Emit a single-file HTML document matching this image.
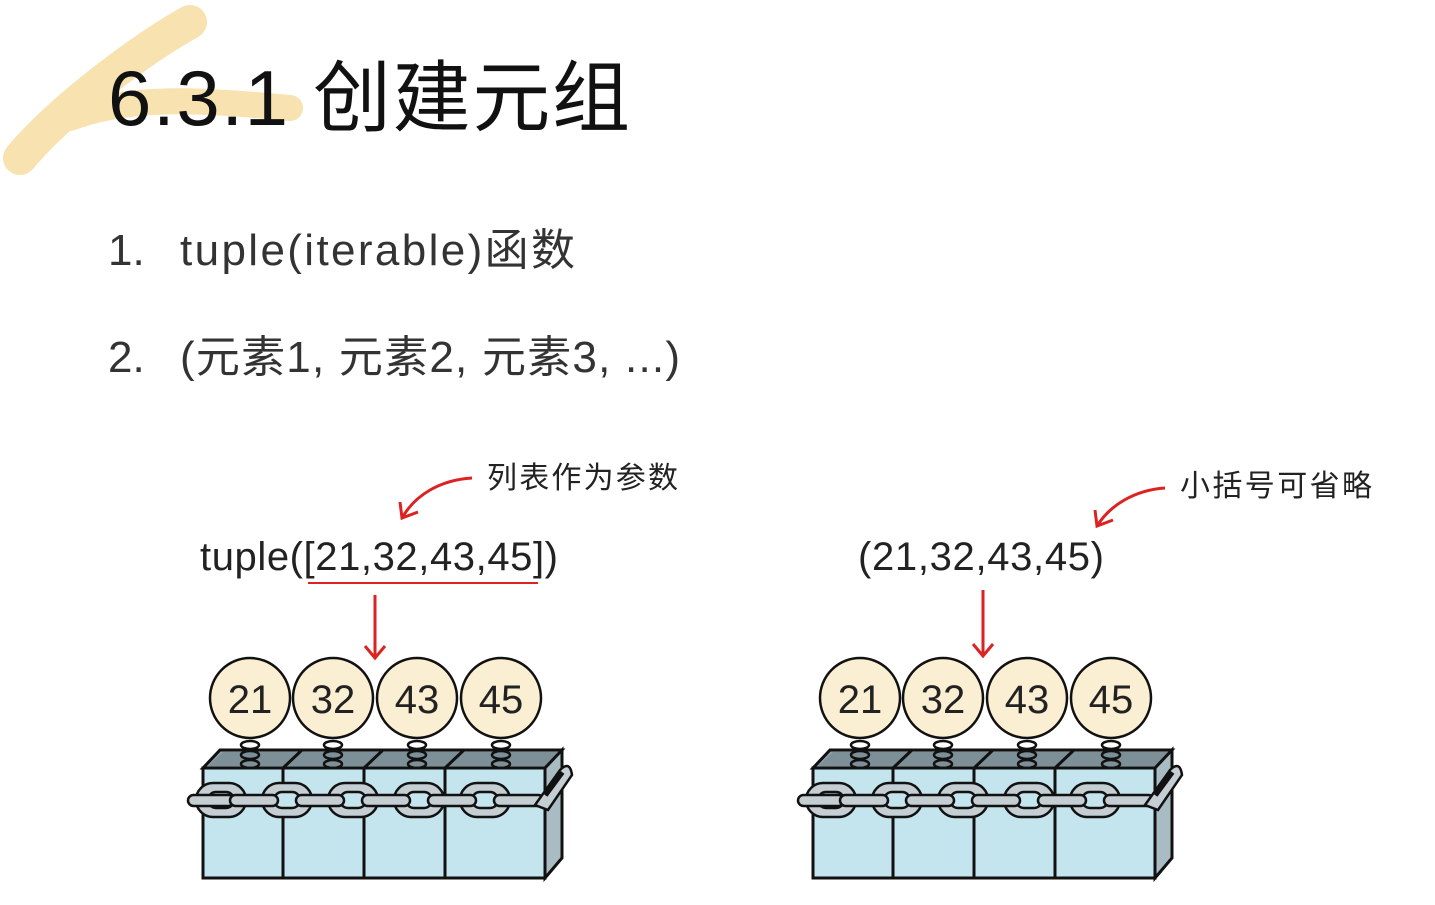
<!DOCTYPE html>
<html><head><meta charset="utf-8"><style>
html,body{margin:0;padding:0;background:#fff;}
body{width:1435px;height:905px;overflow:hidden;position:relative;}
</style></head><body>
<svg width="1435" height="905" viewBox="0 0 1435 905" xmlns="http://www.w3.org/2000/svg" style="position:absolute;left:0;top:0">
<defs>
<g id="box">
  <polygon points="203,768 220,750 562,750 545,768" fill="#8fa2aa" stroke="#111" stroke-width="3"/>
  <polygon points="223,752 560,752 548,766 208,766" fill="#7d9098"/>
  <polygon points="545,768 562,750 562,858 545,878" fill="#a9bcc4" stroke="#111" stroke-width="3"/>
  <rect x="203" y="768" width="342" height="110" fill="#c4e4ee" stroke="#111" stroke-width="3"/>
  <line x1="283" y1="768" x2="283" y2="878" stroke="#111" stroke-width="3"/>
  <line x1="364" y1="768" x2="364" y2="878" stroke="#111" stroke-width="3"/>
  <line x1="445" y1="768" x2="445" y2="878" stroke="#111" stroke-width="3"/>
  <line x1="283" y1="768" x2="302" y2="750" stroke="#111" stroke-width="3"/>
  <line x1="364" y1="768" x2="383" y2="750" stroke="#111" stroke-width="3"/>
  <line x1="445" y1="768" x2="464" y2="750" stroke="#111" stroke-width="3"/>
  <g fill="none" stroke="#111" stroke-width="2.5">
    <ellipse cx="250" cy="745" rx="9" ry="4"/><ellipse cx="250" cy="755" rx="9" ry="4"/><ellipse cx="250" cy="764" rx="9" ry="4"/>
    <ellipse cx="333" cy="745" rx="9" ry="4"/><ellipse cx="333" cy="755" rx="9" ry="4"/><ellipse cx="333" cy="764" rx="9" ry="4"/>
    <ellipse cx="417" cy="745" rx="9" ry="4"/><ellipse cx="417" cy="755" rx="9" ry="4"/><ellipse cx="417" cy="764" rx="9" ry="4"/>
    <ellipse cx="501" cy="745" rx="9" ry="4"/><ellipse cx="501" cy="755" rx="9" ry="4"/><ellipse cx="501" cy="764" rx="9" ry="4"/>
  </g>
  <g fill="#fbefd3" stroke="#111" stroke-width="2.5">
    <circle cx="250" cy="698" r="40"/><circle cx="333" cy="698" r="40"/><circle cx="417" cy="698" r="40"/><circle cx="501" cy="698" r="40"/>
  </g>
  <g stroke="#111" stroke-width="2.5" fill="#c4ced3">
    <rect x="196" y="783" width="50" height="34" rx="17"/>
    <rect x="262" y="783" width="50" height="34" rx="17"/>
    <rect x="328" y="783" width="50" height="34" rx="17"/>
    <rect x="394" y="783" width="50" height="34" rx="17"/>
    <rect x="460" y="783" width="50" height="34" rx="17"/>
    <rect x="208" y="792" width="26" height="16" rx="8" fill="#c4e4ee"/>
    <rect x="274" y="792" width="26" height="16" rx="8" fill="#c4e4ee"/>
    <rect x="340" y="792" width="26" height="16" rx="8" fill="#c4e4ee"/>
    <rect x="406" y="792" width="26" height="16" rx="8" fill="#c4e4ee"/>
    <rect x="472" y="792" width="26" height="16" rx="8" fill="#c4e4ee"/>
    <rect x="188" y="795" width="46" height="11" rx="5.5"/>
    <rect x="230" y="795" width="48" height="11" rx="5.5"/>
    <rect x="296" y="795" width="48" height="11" rx="5.5"/>
    <rect x="362" y="795" width="48" height="11" rx="5.5"/>
    <rect x="428" y="795" width="48" height="11" rx="5.5"/>
    <rect x="494" y="795" width="50" height="11" rx="5.5"/>
    <path d="M535,805 L560,770 Q570,760 572,775 L548,810 Z"/>
    <path d="M545,795 L562,772" stroke-width="6" stroke="#111"/>
  </g>
</g>
</defs>
<path d="M20,158 C60,110 140,50 190,22" stroke="#f7e2b0" stroke-width="34" fill="none" stroke-linecap="round"/>
<path d="M70,118 C130,95 200,100 290,108" stroke="#f7e2b0" stroke-width="26" fill="none" stroke-linecap="round"/>
<g font-family="'Liberation Sans','Noto Sans CJK SC',sans-serif">
<text x="108" y="125" font-size="78" fill="#111" textLength="522" lengthAdjust="spacing">6.3.1 创建元组</text>
<text x="108" y="265" font-size="44" fill="#333">1.</text>
<text x="180" y="265" font-size="44" fill="#333" textLength="395" lengthAdjust="spacing">tuple(iterable)函数</text>
<text x="108" y="372" font-size="44" fill="#333">2.</text>
<text x="180" y="372" font-size="44" fill="#333" textLength="500" lengthAdjust="spacing">(元素1, 元素2, 元素3, ...)</text>
<text x="487" y="488" font-size="30" fill="#222" textLength="191" lengthAdjust="spacing">列表作为参数</text>
<text x="1180" y="496" font-size="30" fill="#222" textLength="192" lengthAdjust="spacing">小括号可省略</text>
<text x="200" y="570" font-size="40" fill="#222" textLength="358" lengthAdjust="spacing">tuple([21,32,43,45])</text>
<text x="858" y="570" font-size="40" fill="#222" textLength="246" lengthAdjust="spacing">(21,32,43,45)</text>
</g>
<line x1="308" y1="583" x2="538" y2="583" stroke="#d22" stroke-width="2"/>
<g stroke="#d22" stroke-width="3" fill="none">
<path d="M375,595 V658 M365,646 L375,658 L385,646"/>
<path d="M983,590 V656 M973,644 L983,656 L993,644"/>
<path d="M472,478 C440,480 415,495 402,518 M400,502 L402,518 L418,512"/>
<path d="M1165,488 C1135,490 1110,505 1097,526 M1095,510 L1097,526 L1113,520"/>
</g>
<use href="#box"/>
<use href="#box" transform="translate(610,0)"/>
<g font-family="'Liberation Sans',sans-serif" font-size="40" fill="#222" text-anchor="middle">
<text x="250" y="713">21</text><text x="333" y="713">32</text><text x="417" y="713">43</text><text x="501" y="713">45</text>
<text x="860" y="713">21</text><text x="943" y="713">32</text><text x="1027" y="713">43</text><text x="1111" y="713">45</text>
</g>
</svg>
</body></html>
